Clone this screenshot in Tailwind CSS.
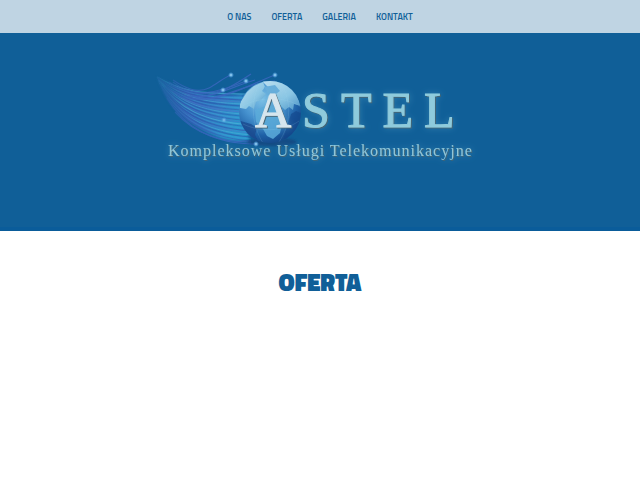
<!DOCTYPE html>
<html lang="pl">
<head>
    <meta charset="UTF-8">
    <meta name="viewport" content="width=device-width, initial-scale=1.0">
    <title>Astel - Oferta</title>
    <!-- Tailwind CSS -->
    <script src="https://cdn.jsdelivr.net/npm/@tailwindcss/browser@4"></script>
</head>
<body class="bg-white font-['Titillium_Web','Noto_Sans',sans-serif] text-[#105f98]">
    <!-- Navigation -->
    <nav class="bg-[#bfd4e3]">
        <ul class="flex h-[33px] items-center justify-center gap-5 text-[9px] font-semibold">
            <li><a href="#onas" class="hover:underline">O NAS</a></li>
            <li><a href="#oferta" class="hover:underline">OFERTA</a></li>
            <li><a href="#galeria" class="hover:underline">GALERIA</a></li>
            <li><a href="#kontakt" class="hover:underline">KONTAKT</a></li>
        </ul>
    </nav>

    <!-- Logo banner -->
    <header class="flex justify-center border-b-4 border-[#0a5c9a] bg-[#105f98] pt-[27px] pb-[57px]">
        <svg class="h-[110px] w-[350px]" viewBox="0 0 350 110" role="img" aria-label="Astel - Kompleksowe Usługi Telekomunikacyjne">
            <defs>
                <radialGradient id="ocean" cx="38%" cy="30%" r="72%">
                    <stop offset="0" stop-color="#7cc0e6"/>
                    <stop offset=".45" stop-color="#4692cf"/>
                    <stop offset=".8" stop-color="#1e60a6"/>
                    <stop offset="1" stop-color="#154a8c"/>
                </radialGradient>
                <linearGradient id="land" x1="0" y1="0" x2="1" y2="1">
                    <stop offset="0" stop-color="#bfe0f0"/>
                    <stop offset=".6" stop-color="#8ac6e4"/>
                    <stop offset="1" stop-color="#4a92c6"/>
                </linearGradient>
                <linearGradient id="tail" x1="0" y1="0" x2="1" y2=".4">
                    <stop offset="0" stop-color="#3a7fc4" stop-opacity=".3"/>
                    <stop offset=".25" stop-color="#3a66ba"/>
                    <stop offset=".55" stop-color="#346cbe"/>
                    <stop offset="1" stop-color="#2c96cc"/>
                </linearGradient>
                <linearGradient id="fade">
                    <stop offset=".02" stop-color="#fff" stop-opacity=".2"/>
                    <stop offset=".25" stop-color="#fff" stop-opacity=".85"/>
                    <stop offset=".5" stop-color="#fff"/>
                </linearGradient>
                <mask id="tip" maskUnits="userSpaceOnUse" x="0" y="0" width="150" height="110">
                    <rect x="10" width="140" height="110" fill="url(#fade)"/>
                </mask>
                <radialGradient id="spark">
                    <stop offset="0" stop-color="#b4e4fb"/>
                    <stop offset=".4" stop-color="#76bdf0" stop-opacity=".8"/>
                    <stop offset="1" stop-color="#4d9ae0" stop-opacity="0"/>
                </radialGradient>
                <clipPath id="disc"><circle cx="127" cy="52" r="31"/></clipPath>
                <filter id="haze"><feGaussianBlur stdDeviation="1"/></filter>
                <filter id="grain"><feGaussianBlur stdDeviation=".5"/></filter>
                <filter id="glow" x="-10%" y="-60%" width="120%" height="220%">
                    <feDropShadow dx="1" dy="1" stdDeviation=".5" flood-color="#4a6470" flood-opacity=".9"/>
                    <feDropShadow dx="0" dy="0" stdDeviation="3" flood-color="#57a6c8" flood-opacity=".4"/>
                </filter>
            </defs>

            <g transform="translate(-2 0)">
                <!-- Fibre bundle -->
                <g mask="url(#tip)">
                    <path d="M13 16 C22 20 34 28 52 33 C67 37 84 35 100 34 L106 80 C88 84 66 76 48 63 C31 51 20 36 13 16Z" fill="url(#tail)" filter="url(#haze)"/>
                    <g id="fibres" fill="none" filter="url(#grain)"></g>
                    <path d="M24 24 C38 50 50 64 76 74 C52 70 28 52 20 30Z" fill="#3f62bd" opacity=".5" filter="url(#haze)"/>
                    <g fill="none" stroke="#4068c4" stroke-width="1.2" opacity=".75">
                        <path d="M30 20 C42 28 54 34 66 28 C74 24 80 18 88 15"/>
                        <path d="M30 22 C52 40 76 32 103 21"/>
                        <path d="M26 22 C44 36 60 36 80 30"/>
                        <path d="M30 31 C58 46 84 30 108 14"/>
                        <path d="M40 36 C72 46 98 28 132 15"/>
                        <path d="M34 35 C66 50 100 22 132 21"/>
                        <path d="M50 36 C72 38 90 26 112 20"/>
                        <path d="M24 38 C44 72 76 84 113 84"/>
                        <path d="M32 52 C54 76 80 82 108 82"/>
                    </g>
                </g>
                <g fill="url(#spark)">
                    <circle cx="88" cy="15" r="3"/>
                    <circle cx="103" cy="21" r="3"/>
                    <circle cx="80" cy="30" r="3"/>
                    <circle cx="132" cy="15" r="3"/>
                    <circle cx="81" cy="60" r="3" opacity=".7"/>
                </g>

                <!-- Globe -->
                <ellipse cx="129" cy="82" rx="25" ry="4" fill="#123e77" opacity=".6" filter="url(#haze)"/>
                <circle cx="127" cy="52" r="31" fill="url(#ocean)"/>
                <g clip-path="url(#disc)">
                    <g filter="url(#grain)">
                        <path d="M97 43 L104 32 L111 26 L120 22 L122 27 L119 31 L123 34 L118 40 L113 42 L111 49 L106 46 L103 49 L97 48Z" fill="url(#land)"/>
                        <path d="M118 20 L136 20 L145 25 L153 33 L158 46 L151 44 L150 50 L146 47 L142 50 L136 44 L131 46 L129 41 L124 42 L125 36 L130 31 L125 27Z" fill="url(#land)"/>
                        <path d="M112 50 L125 45 L134 48 L142 57 L139 65 L137 73 L130 79 L124 76 L120 69 L113 62Z" fill="#5cabdb" opacity=".85"/>
                        <path d="M94 60 L108 64 L114 68 L112 75 L117 84 L105 82Z" fill="#17478c" opacity=".75"/>
                        <path d="M148 54 L153 51 L158 53 L158 68 L147 80 L140 79 L144 67Z" fill="#17478c" opacity=".65"/>
                        <path d="M121 27 L132 25 L137 31 L130 36 L125 34Z" fill="#67aedb"/>
                    </g>
                    <path d="M96 48 C112 37 141 35 158 47 M100 64 C116 72 141 72 156 61 M118 21 C106 40 109 66 120 83 M138 23 C149 42 148 64 136 82" fill="none" stroke="#a5dcf2" stroke-width=".5" opacity=".3"/>
                </g>
                <circle cx="113" cy="84" r="3" fill="url(#spark)"/>
            </g>

            <!-- Company name -->
            <text x="110" y="67" font-family="'Liberation Serif', serif" font-size="50" letter-spacing="11" fill="#8fcbdc" stroke="#8fcbdc" stroke-width="1" filter="url(#glow)"><tspan fill="#d6e6ee" stroke="#d6e6ee">A</tspan>STEL</text>
            <text x="23" y="96" font-family="'Liberation Serif', serif" font-size="16" letter-spacing="1" fill="#8fc6d8" filter="url(#glow)">Kompleksowe Usługi Telekomunikacyjne</text>
        </svg>
    </header>

    <!-- Main Content -->
    <main class="px-4 pt-8">
        <h1 id="oferta" class="text-center text-2xl leading-[38px] font-black">OFERTA</h1>
    </main>

    <script>
        // Draw the strands between the tip of the tail and the globe
        const fibres = document.getElementById('fibres');
        const colors = ['#4db2da', '#2a5cae', '#3d9dd4', '#3557b0', '#4a78ca'];
        const count = 24;

        for (let i = 0; i < count; i++) {
            const t = i / (count - 1);
            const path = document.createElementNS('http://www.w3.org/2000/svg', 'path');
            path.setAttribute('d', `M${14 + t * 3} ${17 + t * 7} C${44 - t * 14} ${35 + t * 20} ${66 - t * 8} ${33 + t * 44} ${104 + t * 4} ${34 + t * 47}`);
            path.setAttribute('stroke', colors[i % colors.length]);
            path.setAttribute('stroke-width', i % 3 === 0 ? 1.2 : 0.8);
            path.setAttribute('opacity', 0.7);
            fibres.appendChild(path);
        }
    </script>
</body>
</html>
